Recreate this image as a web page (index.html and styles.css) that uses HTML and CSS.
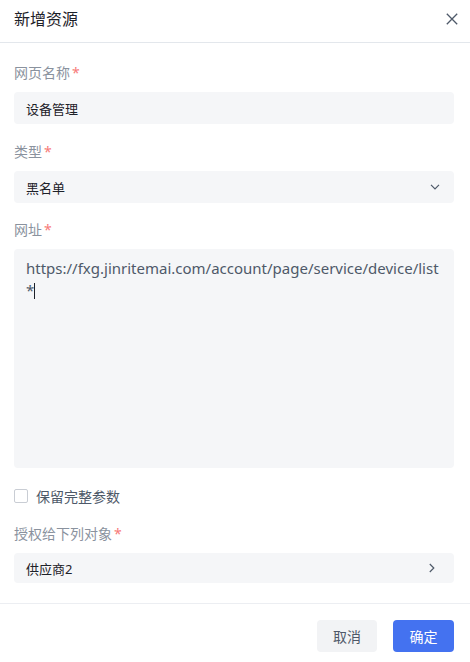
FILE: index.html
```html
<!DOCTYPE html>
<html lang="zh">
<head>
<meta charset="utf-8">
<title>新增资源</title>
<link rel="stylesheet" href="styles.css">
</head>
<body>
<div class="dialog">
  <div class="header">
    <div class="title">新增资源</div>
    <svg class="close" width="12" height="12" viewBox="0 0 12 12"><path d="M0.8 0.8L11.2 11.2M11.2 0.8L0.8 11.2" stroke="#4e5969" stroke-width="1.3" fill="none"/></svg>
  </div>
  <div class="body">
    <div class="item">
      <div class="label">网页名称<span class="req">*</span></div>
      <div class="field">设备管理</div>
    </div>
    <div class="item tight">
      <div class="label">类型<span class="req">*</span></div>
      <div class="field select">
        <span>黑名单</span>
        <svg width="10" height="6" viewBox="0 0 10 6"><path d="M1 0.8L5 4.8L9 0.8" stroke="#4e5969" stroke-width="1.2" fill="none"/></svg>
      </div>
    </div>
    <div class="item">
      <div class="label">网址<span class="req">*</span></div>
      <div class="textarea">https://fxg.jinritemai.com/account/page/service/device/list<br>*<span class="caret"></span></div>
    </div>
    <div class="check-row">
      <span class="checkbox"></span>
      <span class="check-label">保留完整参数</span>
    </div>
    <div class="item last">
      <div class="label">授权给下列对象<span class="req">*</span></div>
      <div class="field select short">
        <span>供应商2</span>
        <svg width="6" height="10" viewBox="0 0 6 10"><path d="M0.8 1L4.8 5L0.8 9" stroke="#4e5969" stroke-width="1.2" fill="none"/></svg>
      </div>
    </div>
  </div>
  <div class="footer">
    <button class="btn cancel">取消</button>
    <button class="btn primary">确定</button>
  </div>
</div>
</body>
</html>
```

FILE: styles.css
```css
html, body {
  margin: 0;
  padding: 0;
  background: #ffffff;
}
body {
  font-family: "Noto Sans", "Noto Sans CJK SC", sans-serif;
  color: #1d2129;
}
.dialog {
  width: 470px;
}
.header {
  height: 42px;
  border-bottom: 1px solid #e3e7ec;
  display: flex;
  align-items: center;
  justify-content: space-between;
  padding: 0 12px 0 14px;
}
.title {
  font-size: 16px;
  line-height: 22px;
  color: #1d2129;
  margin-top: -4px;
}
.close {
  margin-top: -4px;
}
.body {
  padding: 20px 16px 0 14px;
}
.item {
  margin-bottom: 18px;
}
.item.tight {
  margin-bottom: 17px;
}
.label {
  font-size: 14px;
  line-height: 20px;
  color: #8a929e;
  margin-bottom: 9px;
}
.req {
  color: #f77b78;
  margin-left: 2px;
}
.field {
  height: 32px;
  background: #f5f6f8;
  border-radius: 4px;
  padding: 0 12px;
  display: flex;
  align-items: center;
  font-size: 13px;
  color: #1d2129;
}
.select {
  justify-content: space-between;
  padding-right: 14px;
}
.short {
  height: 30px;
  padding-right: 19px;
}
.textarea {
  height: 219px;
  box-sizing: border-box;
  background: #f5f6f8;
  border-radius: 4px;
  padding: 8px 12px;
  font-size: 15px;
  line-height: 22px;
  color: #4e5969;
}
.caret {
  display: inline-block;
  width: 1px;
  height: 16px;
  background: #1d2129;
  vertical-align: -3px;
}
.check-row {
  display: flex;
  align-items: center;
  height: 20px;
  margin-bottom: 18px;
}
.checkbox {
  width: 12px;
  height: 12px;
  border: 1px solid #c9cdd4;
  border-radius: 2px;
  background: #fff;
}
.check-label {
  margin-left: 8px;
  font-size: 14px;
  color: #4e5969;
}
.item.last {
  margin-bottom: 20px;
}
.footer {
  border-top: 1px solid #eceef2;
  display: flex;
  justify-content: flex-end;
  gap: 16px;
  padding: 16px 16px 0 0;
}
.btn {
  height: 32px;
  border: none;
  border-radius: 4px;
  font-family: "Noto Sans CJK SC", sans-serif;
  font-size: 14px;
  padding: 0;
  width: 60px;
}
.cancel {
  background: #f2f3f5;
  color: #4e5969;
}
.primary {
  width: 61px;
  background: #4472f0;
  color: #ffffff;
}
```
